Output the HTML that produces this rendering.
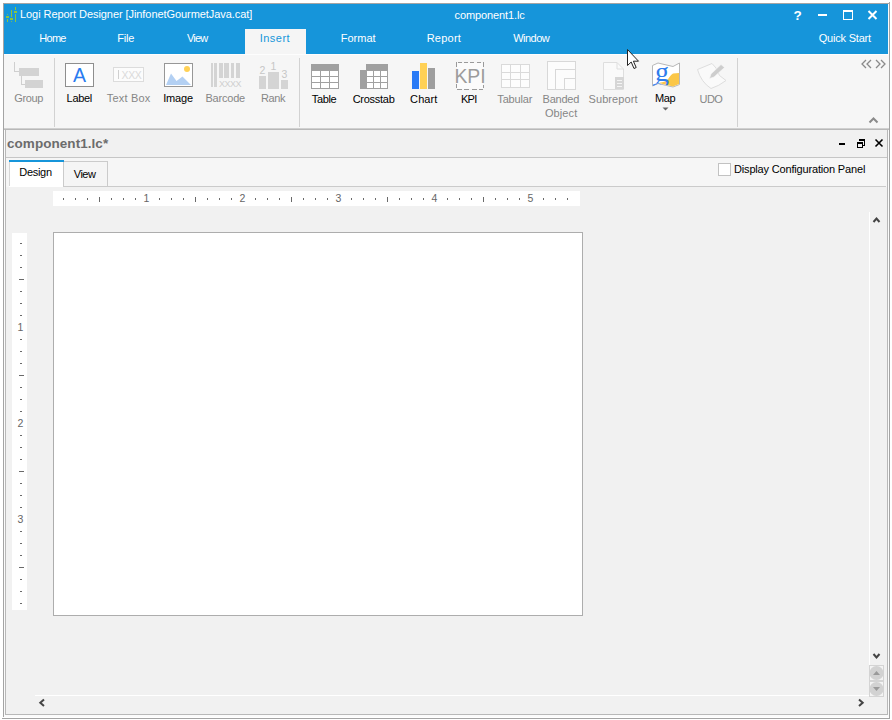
<!DOCTYPE html>
<html lang="en">
<head>
<meta charset="utf-8">
<title>Logi Report Designer</title>
<style>
*{box-sizing:border-box;margin:0;padding:0}
html,body{width:892px;height:720px;overflow:hidden;background:#fff}
body{position:relative;font-family:"Liberation Sans",sans-serif;font-size:11px;color:#000;line-height:14px}
div,span{position:absolute}
.t{white-space:nowrap;line-height:14px;height:14px}
.c{transform:translateX(-50%);text-align:center}
.w{color:#fff}
.dis{color:#868686}
#frame{left:3px;top:3px;width:887px;height:714px;border:1px solid #a4a4a4;border-bottom:none;background:#fbfbfb}
#frameb{left:2px;top:718px;width:888px;height:1px;background:#a4a4a4}
#framer{left:889px;top:2px;width:1px;height:716px;background:#a4a4a4}
#hdr{left:4px;top:4px;width:884px;height:50px;background:#1695da}
#instab{left:245px;top:29px;width:61px;height:26px;background:#f5f5f5}
#ribbon{left:4px;top:54px;width:885px;height:74px;background:#f6f6f6;border-top:1px solid #fdfdfd}
#ribline{left:4px;top:128px;width:885px;height:2px;background:#bcbcbc;border-top:1px solid #d0d0d0}
.sep{top:58px;width:1px;height:69px;background:#d2d2d2}
#sub{left:5px;top:129px;width:883px;height:586px;border:1px solid #b8b8b8;background:#f1f1f1}
#subtitle{left:6px;top:130px;width:881px;height:28px;background:#f1f1f1;border-bottom:1px solid #c6c6c6}
#subtitle b{position:absolute;left:1px;top:5px;font-size:13.5px;line-height:18px;color:#6c6c6c;white-space:nowrap;letter-spacing:0.05px}
#tabrow{left:6px;top:158px;width:881px;height:29px;background:#f6f6f6}
#tabline{left:64px;top:186px;width:822px;height:1px;background:#cbcbcb}
#tabD{left:9px;top:160px;width:55px;height:27px;background:#fff}
#tabDt{left:9px;top:160px;width:55px;height:2px;background:#1695da}
#tabDl{left:9px;top:162px;width:1px;height:24px;background:#d6d6d6}
#tabDr{left:63px;top:162px;width:1px;height:25px;background:#cbcbcb}
#tabV{left:64px;top:161px;width:44px;height:26px;background:#f5f5f5;border:1px solid #cbcbcb;border-left:none}
#cb{left:718px;top:163px;width:13px;height:13px;background:#fff;border:1px solid #c2c2c2}
#hruler{left:53px;top:191px;width:527px;height:15px;background:#fff}
#vruler{left:12px;top:233px;width:15px;height:377px;background:#fff}
#page{left:53px;top:232px;width:530px;height:384px;background:#fff;border:1px solid #adadad}
#vsb{left:869px;top:212px;width:1px;height:484px;background:#fff}
#hsb{left:35px;top:695px;width:835px;height:1px;background:#fff}
svg{position:absolute;left:0;top:0}
svg text{font-family:"Liberation Sans",sans-serif}
.tk{fill:#6a6a6a}
.rn{font-size:10.5px;fill:#666}
</style>
</head>
<body>
<div id="frame"></div><div id="frameb"></div><div id="framer"></div>
<div id="hdr"></div>
<div id="instab"></div>
<div id="ribbon"></div>
<div id="ribline"></div>
<div class="sep" style="left:54px"></div>
<div class="sep" style="left:299px"></div>
<div class="sep" style="left:737px"></div>
<div id="sub"></div>
<div id="subtitle"><b>component1.lc*</b></div>
<div id="tabrow"></div>
<div id="tabline"></div><div id="tabD"></div><div id="tabDt"></div><div id="tabDl"></div><div id="tabDr"></div>
<div id="tabV"></div>
<div id="cb"></div>
<div id="hruler"></div>
<div id="vruler"></div>
<div id="page"></div>
<div id="vsb"></div>
<div id="hsb"></div>
<span class="t w" style="left:20px;top:7px;letter-spacing:-0.07px">Logi Report Designer [JinfonetGourmetJava.cat]</span>
<span class="t w" style="left:454.5px;top:8px;letter-spacing:-0.1px">component1.lc</span>
<span class="t c" style="left:52.5px;top:31px;color:#fff;letter-spacing:-0.7px;">Home</span>
<span class="t c" style="left:125.7px;top:31px;color:#fff;letter-spacing:-0.2px;">File</span>
<span class="t c" style="left:197.2px;top:31px;color:#fff;letter-spacing:-0.8px;">View</span>
<span class="t c" style="left:274.9px;top:31px;color:#1695da;letter-spacing:0.5px;">Insert</span>
<span class="t c" style="left:358.2px;top:31px;color:#fff;">Format</span>
<span class="t c" style="left:443.9px;top:31px;color:#fff;letter-spacing:0.25px;">Report</span>
<span class="t c" style="left:531.2px;top:31px;color:#fff;letter-spacing:-0.5px;">Window</span>
<span class="t c" style="left:844.8px;top:31px;color:#fff;letter-spacing:-0.2px;">Quick Start</span>
<span class="t c dis" style="left:28.6px;top:90.5px;letter-spacing:-0.35px;">Group</span>
<span class="t c " style="left:79.3px;top:90.5px;letter-spacing:-0.3px;">Label</span>
<span class="t c dis" style="left:128.6px;top:90.5px;letter-spacing:0.2px;">Text Box</span>
<span class="t c " style="left:178.1px;top:90.5px;letter-spacing:-0.15px;">Image</span>
<span class="t c dis" style="left:225.2px;top:90.5px;letter-spacing:-0.2px;">Barcode</span>
<span class="t c dis" style="left:273.1px;top:90.5px;letter-spacing:-0.35px;">Rank</span>
<span class="t c " style="left:324.0px;top:91.5px;letter-spacing:-0.4px;">Table</span>
<span class="t c " style="left:373.6px;top:91.5px;letter-spacing:-0.28px;">Crosstab</span>
<span class="t c " style="left:423.8px;top:91.5px;letter-spacing:0.1px;">Chart</span>
<span class="t c " style="left:468.8px;top:91.5px;letter-spacing:-0.7px;">KPI</span>
<span class="t c dis" style="left:514.8px;top:91.5px;letter-spacing:-0.15px;">Tabular</span>
<span class="t c dis" style="left:560.8px;top:91.5px;letter-spacing:-0.24px;">Banded</span>
<span class="t c dis" style="left:561.1px;top:105.5px;letter-spacing:0.1px;">Object</span>
<span class="t c dis" style="left:613.1px;top:91.5px;letter-spacing:0.1px;">Subreport</span>
<span class="t c " style="left:665.2px;top:90.5px;letter-spacing:-0.4px;">Map</span>
<span class="t c dis" style="left:710.9px;top:91.5px;letter-spacing:-0.6px;">UDO</span>
<span class="t c" style="left:35.5px;top:165px;letter-spacing:-0.3px">Design</span>
<span class="t c" style="left:84.6px;top:167px;letter-spacing:-0.5px">View</span>
<span class="t" style="left:734px;top:162px;letter-spacing:-0.17px">Display Configuration Panel</span>
<svg width="892" height="720" viewBox="0 0 892 720">
<g shape-rendering="crispEdges">
<!-- Group -->
<path d="M14.5 62V71.5H19M21.5 76V84.5H25" fill="none" stroke="#cfcfcf"/>
<rect x="19" y="68" width="20" height="8" fill="#d3d3d3"/>
<rect x="25" y="80" width="18" height="8" fill="#d3d3d3"/>
<!-- Label -->
<rect x="65.5" y="63.5" width="28" height="23" fill="#fff" stroke="#8e8e8e"/>
<!-- Text Box -->
<rect x="113.5" y="67.5" width="30" height="14" fill="#fcfcfc" stroke="#dcdcdc"/>
<rect x="118" y="70" width="1" height="9" fill="#d0d0d0"/>
<!-- Image -->
<rect x="164.5" y="63.5" width="28" height="23" fill="#fff" stroke="#979797"/>
<!-- Barcode -->
<g fill="#d4d4d4">
<rect x="211" y="63" width="2" height="24"/><rect x="214" y="63" width="3" height="24"/>
<rect x="219" y="63" width="4" height="15"/><rect x="224" y="63" width="5" height="15"/><rect x="231" y="63" width="3" height="15"/><rect x="236" y="63" width="4" height="15"/>
</g>
<!-- Rank -->
<g fill="#d4d4d4"><rect x="259" y="76" width="7" height="13"/><rect x="268" y="72" width="11" height="17"/><rect x="281" y="80" width="7" height="9"/></g>
<!-- Table -->
<rect x="311" y="64" width="28" height="25" fill="#a0a0a0"/>
<g fill="#fff">
<rect x="312" y="71" width="8" height="5"/><rect x="321" y="71" width="8" height="5"/><rect x="330" y="71" width="8" height="5"/>
<rect x="312" y="77" width="8" height="5"/><rect x="321" y="77" width="8" height="5"/><rect x="330" y="77" width="8" height="5"/>
<rect x="312" y="83" width="8" height="5"/><rect x="321" y="83" width="8" height="5"/><rect x="330" y="83" width="8" height="5"/>
</g>
<!-- Crosstab -->
<rect x="360" y="70" width="7" height="19" fill="#a0a0a0"/>
<rect x="366" y="64" width="22" height="25" fill="#a0a0a0"/>
<g fill="#fff">
<rect x="367" y="71" width="6" height="5"/><rect x="374" y="71" width="6" height="5"/><rect x="381" y="71" width="6" height="5"/>
<rect x="367" y="77" width="6" height="5"/><rect x="374" y="77" width="6" height="5"/><rect x="381" y="77" width="6" height="5"/>
<rect x="367" y="83" width="6" height="5"/><rect x="374" y="83" width="6" height="5"/><rect x="381" y="83" width="6" height="5"/>
</g>
<!-- Chart -->
<rect x="412" y="71" width="7" height="18" fill="#2a7bf6"/>
<rect x="420" y="63" width="7" height="26" fill="#ffd156"/>
<rect x="428" y="68" width="7" height="21" fill="#9e9e9e"/>
<!-- KPI -->
<rect x="457" y="63" width="26" height="26" fill="#fbfbfb"/>
<path d="M458 62.5H462M464 62.5H468M470 62.5H474M477 62.5H481M457 89.5H462M464 89.5H469M472 89.5H477M479 89.5H483M456.5 62V67M456.5 84V88M483.5 62V67M483.5 85V88" fill="none" stroke="#9a9a9a"/>
<!-- Tabular -->
<rect x="501.5" y="64.5" width="28" height="23" fill="#fdfdfd" stroke="#dadada"/>
<path d="M510.5 64V88M520.5 64V88M501 72.5H530M501 79.5H530" stroke="#dadada" fill="none"/>
<!-- Banded -->
<rect x="547.5" y="61.5" width="28" height="28" fill="#fcfcfc" stroke="#d8d8d8"/>
<path d="M575 69.5H555.5V89M575 78.5H564.5V89" stroke="#d8d8d8" fill="none"/>
</g>
<!-- Label A -->
<text x="79.5" y="82" font-size="19.5" fill="#2a7bf0" text-anchor="middle">A</text>
<text x="131.5" y="79" font-size="10.5" fill="#dadada" text-anchor="middle" letter-spacing="-0.3">XXX</text>
<!-- Image content -->
<circle cx="187" cy="69" r="3" fill="#ffd156"/>
<path d="M166 85L171 73.5L176.5 81L182.5 76.5L191 85Z" fill="#b3d0f3"/>
<text x="230" y="87" font-size="9" fill="#cfcfcf" text-anchor="middle" letter-spacing="-0.5">XXXX</text>
<g font-size="10.5" fill="#c6c6c6" text-anchor="middle"><text x="262.5" y="74">2</text><text x="273.5" y="69.5">1</text><text x="284.5" y="78">3</text></g>
<text transform="translate(470 83) scale(0.97 1)" x="0" y="0" font-size="20" fill="#9c9c9c" text-anchor="middle">KPI</text>
<!-- Subreport -->
<path d="M603.5 62.5H617L623.5 69V89.5H603.5Z" fill="#fafafa" stroke="#dedede"/>
<path d="M617 62.5V69H623.5" fill="none" stroke="#dedede"/>
<rect x="615" y="77" width="9" height="12" fill="#d6d6d6"/>
<path d="M617 80.5H622M617 83.5H622M617 86.5H622" stroke="#f4f4f4"/>
<!-- Map -->
<path d="M652.5 65.5L658 63L673 66.5L679.5 63V84.5L673 87L658 83.5L652.5 86Z" fill="#fff" stroke="#b8b8b8"/>
<path d="M679 73L673 73.5C670 75 669 79 666 81C663 82.5 661 82 659 83L673 86.5L679 84Z" fill="#fbc748"/>
<path d="M653 86L658 83.8L662 84.7C660 83 656 83 653 84.5Z" fill="#4285f4"/>
<clipPath id="mc"><path d="M653 66L658 63.5L673 67L679 64V84L673 86.5L658 83L653 85.5Z"/></clipPath>
<text x="662" y="80.5" font-size="28" fill="#2f7ded" text-anchor="middle" clip-path="url(#mc)" style="font-family:'Liberation Serif',serif">g</text>
<path d="M662.5 107.5H668.5L665.5 110.5Z" fill="#666"/>
<!-- UDO -->
<path d="M697.5 69.5L712 63.5L716 68L719.5 75.5L726 80.5Q719 86 711 88.5Q701 82 697.5 69.5Z" fill="#fafafa" stroke="#dedede"/>
<path d="M709.5 78.5L711 74L721 64.5L724.5 67.5L714 77Z" fill="#cdcdcd" stroke="#f6f6f6" stroke-width="0.6"/>
<!-- ribbon chevrons -->
<g fill="none" stroke="#8a8a8a" stroke-width="1.3">
<path d="M866 60L862 64L866 68M871 60L867 64L871 68"/>
<path d="M876 60L880 64L876 68M881 60L885 64L881 68"/>
</g>
<path d="M869.5 122.5L873.5 118.5L877.5 122.5" fill="none" stroke="#8a8a8a" stroke-width="2"/>
<!-- window controls -->
<text x="797.5" y="20" font-size="13.5" font-weight="bold" fill="#fff" text-anchor="middle">?</text>
<rect x="818" y="14" width="9" height="2" fill="#fff"/>
<path d="M843 10h10v10h-10zM844 12v7h8v-7z" fill="#fff" fill-rule="evenodd" shape-rendering="crispEdges"/>
<path d="M868.5 11L876.5 19M876.5 11L868.5 19" stroke="#fff" stroke-width="2" fill="none"/>
<!-- sub window controls -->
<rect x="839" y="143" width="6" height="2" fill="#000"/>
<g fill="none" stroke="#000" stroke-width="1.3" shape-rendering="crispEdges"><path d="M859.5 141V139.5H864.5V145.5H863"/><rect x="857.5" y="142.5" width="5" height="5"/><path d="M857 143H863M859 140H865" stroke-width="1"/></g>
<path d="M875.5 139.5L882.5 146.5M882.5 139.5L875.5 146.5" stroke="#000" stroke-width="1.6" fill="none"/>
<!-- scrollbar arrows -->
<g fill="none" stroke="#444" stroke-width="2">
<path d="M873.5 222L876.5 218.5L879.5 222"/>
<path d="M873.5 654L876.5 657.5L879.5 654"/>
<path d="M44 699.5L40.3 702.8L44 706"/>
<path d="M859 699.5L862.7 702.8L859 706"/>
</g>
<!-- page up/down buttons -->
<g>
<rect x="869.5" y="665.5" width="14" height="15" fill="#f4f4f4" stroke="#d4d4d4"/>
<rect x="869.5" y="681.5" width="14" height="15" fill="#f4f4f4" stroke="#d4d4d4"/>
<circle cx="876.5" cy="673" r="7" fill="#d2d2d2"/>
<circle cx="876.5" cy="689" r="7" fill="#d2d2d2"/>
<path d="M873 675H880L876.5 671Z" fill="#9a9a9a"/>
<path d="M873 687H880L876.5 691Z" fill="#9a9a9a"/>
</g>
<!-- logo -->
<g fill="#8cc63f" shape-rendering="crispEdges">
<rect x="7" y="14" width="1" height="1" opacity="0.7"/><rect x="6" y="16" width="3" height="2"/><rect x="7" y="19" width="1" height="3"/>
<rect x="11" y="10" width="1" height="7"/><rect x="10" y="18" width="3" height="2"/><rect x="11" y="19" width="1" height="1"/><rect x="11" y="21" width="1" height="1" opacity="0.8"/>
<rect x="15" y="7" width="1" height="3"/><rect x="14" y="11" width="3" height="2"/><rect x="15" y="14" width="1" height="8"/>
</g>
<!-- cursor -->
<path d="M627.5 49.5V65.5L631.2 62L634 68.5L636.2 67.5L633.400 61.2H638.5Z" fill="#fff" stroke="#222" stroke-width="1"/>
<g shape-rendering="crispEdges"><rect x="63" y="198" width="1" height="2" class="tk"/>
<rect x="75" y="198" width="1" height="2" class="tk"/>
<rect x="87" y="198" width="1" height="2" class="tk"/>
<rect x="99" y="197" width="1" height="5" class="tk"/>
<rect x="111" y="198" width="1" height="2" class="tk"/>
<rect x="123" y="198" width="1" height="2" class="tk"/>
<rect x="135" y="198" width="1" height="2" class="tk"/>
<text x="146.5" y="202.3" class="rn" text-anchor="middle">1</text>
<rect x="159" y="198" width="1" height="2" class="tk"/>
<rect x="171" y="198" width="1" height="2" class="tk"/>
<rect x="183" y="198" width="1" height="2" class="tk"/>
<rect x="195" y="197" width="1" height="5" class="tk"/>
<rect x="207" y="198" width="1" height="2" class="tk"/>
<rect x="219" y="198" width="1" height="2" class="tk"/>
<rect x="231" y="198" width="1" height="2" class="tk"/>
<text x="242.5" y="202.3" class="rn" text-anchor="middle">2</text>
<rect x="255" y="198" width="1" height="2" class="tk"/>
<rect x="267" y="198" width="1" height="2" class="tk"/>
<rect x="279" y="198" width="1" height="2" class="tk"/>
<rect x="291" y="197" width="1" height="5" class="tk"/>
<rect x="303" y="198" width="1" height="2" class="tk"/>
<rect x="315" y="198" width="1" height="2" class="tk"/>
<rect x="327" y="198" width="1" height="2" class="tk"/>
<text x="338.5" y="202.3" class="rn" text-anchor="middle">3</text>
<rect x="351" y="198" width="1" height="2" class="tk"/>
<rect x="363" y="198" width="1" height="2" class="tk"/>
<rect x="375" y="198" width="1" height="2" class="tk"/>
<rect x="387" y="197" width="1" height="5" class="tk"/>
<rect x="399" y="198" width="1" height="2" class="tk"/>
<rect x="411" y="198" width="1" height="2" class="tk"/>
<rect x="423" y="198" width="1" height="2" class="tk"/>
<text x="434.5" y="202.3" class="rn" text-anchor="middle">4</text>
<rect x="447" y="198" width="1" height="2" class="tk"/>
<rect x="459" y="198" width="1" height="2" class="tk"/>
<rect x="471" y="198" width="1" height="2" class="tk"/>
<rect x="483" y="197" width="1" height="5" class="tk"/>
<rect x="495" y="198" width="1" height="2" class="tk"/>
<rect x="507" y="198" width="1" height="2" class="tk"/>
<rect x="519" y="198" width="1" height="2" class="tk"/>
<text x="530.5" y="202.3" class="rn" text-anchor="middle">5</text>
<rect x="543" y="198" width="1" height="2" class="tk"/>
<rect x="555" y="198" width="1" height="2" class="tk"/>
<rect x="567" y="198" width="1" height="2" class="tk"/>
<rect x="20" y="243" width="2" height="1" class="tk"/>
<rect x="20" y="255" width="2" height="1" class="tk"/>
<rect x="20" y="267" width="2" height="1" class="tk"/>
<rect x="19" y="279" width="5" height="1" class="tk"/>
<rect x="20" y="291" width="2" height="1" class="tk"/>
<rect x="20" y="303" width="2" height="1" class="tk"/>
<rect x="20" y="315" width="2" height="1" class="tk"/>
<text x="20.5" y="331" class="rn" text-anchor="middle">1</text>
<rect x="20" y="339" width="2" height="1" class="tk"/>
<rect x="20" y="351" width="2" height="1" class="tk"/>
<rect x="20" y="363" width="2" height="1" class="tk"/>
<rect x="19" y="375" width="5" height="1" class="tk"/>
<rect x="20" y="387" width="2" height="1" class="tk"/>
<rect x="20" y="399" width="2" height="1" class="tk"/>
<rect x="20" y="411" width="2" height="1" class="tk"/>
<text x="20.5" y="427" class="rn" text-anchor="middle">2</text>
<rect x="20" y="435" width="2" height="1" class="tk"/>
<rect x="20" y="447" width="2" height="1" class="tk"/>
<rect x="20" y="459" width="2" height="1" class="tk"/>
<rect x="19" y="471" width="5" height="1" class="tk"/>
<rect x="20" y="483" width="2" height="1" class="tk"/>
<rect x="20" y="495" width="2" height="1" class="tk"/>
<rect x="20" y="507" width="2" height="1" class="tk"/>
<text x="20.5" y="523" class="rn" text-anchor="middle">3</text>
<rect x="20" y="531" width="2" height="1" class="tk"/>
<rect x="20" y="543" width="2" height="1" class="tk"/>
<rect x="20" y="555" width="2" height="1" class="tk"/>
<rect x="19" y="567" width="5" height="1" class="tk"/>
<rect x="20" y="579" width="2" height="1" class="tk"/>
<rect x="20" y="591" width="2" height="1" class="tk"/>
<rect x="20" y="603" width="2" height="1" class="tk"/></g>
</svg>
</body>
</html>
